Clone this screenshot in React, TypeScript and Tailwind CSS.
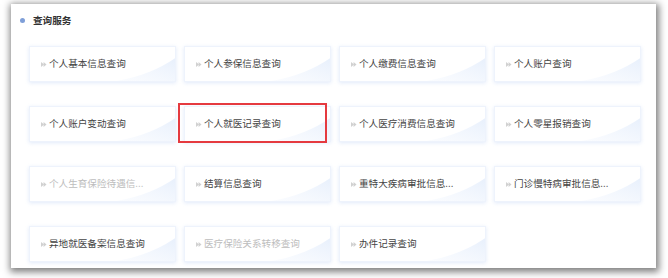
import React from "react";

type Item = { name: string; disabled?: boolean; active?: boolean };

const items: Item[] = [
  { name: "个人基本信息查询" },
  { name: "个人参保信息查询" },
  { name: "个人缴费信息查询" },
  { name: "个人账户查询" },
  { name: "个人账户变动查询" },
  { name: "个人就医记录查询", active: true },
  { name: "个人医疗消费信息查询" },
  { name: "个人零星报销查询" },
  { name: "个人生育保险待遇信...", disabled: true },
  { name: "结算信息查询" },
  { name: "重特大疾病审批信息..." },
  { name: "门诊慢特病审批信息..." },
  { name: "异地就医备案信息查询" },
  { name: "医疗保险关系转移查询", disabled: true },
  { name: "办件记录查询" },
];

// tiny double arrow in front of each label
const Arrow = () => (
  <svg width="6" height="5" viewBox="0 0 7 6" className="shrink-0">
    <path d="M0 0L3.5 3L0 6Z" fill="#d0d0d0" />
    <path d="M3 0L6.5 3L3 6Z" fill="#d0d0d0" />
  </svg>
);

function Card({ item }: { item: Item }) {
  return (
    <div className="relative h-[36px] bg-white border border-[#eef3fc] shadow-[0_1px_4px_rgba(120,160,230,0.22)]">
      <svg className="absolute inset-0" width="100%" height="100%" viewBox="0 0 147 36" preserveAspectRatio="none">
        <defs>
          <linearGradient id="sw" x1="0" y1="1" x2="1" y2="0">
            <stop offset="0" stopColor="#f3f7fe" stopOpacity="0.4" />
            <stop offset="1" stopColor="#e8f0fc" />
          </linearGradient>
        </defs>
        <path d="M88 36 Q122 30 147 12 L147 36 Z" fill="url(#sw)" />
      </svg>
      <div className="relative flex items-center h-full pl-[11px] gap-[2px]">
        <Arrow />
        <span className={`text-[9.6px] leading-none ${item.disabled ? "text-[#bdbdbd]" : "text-[#444]"}`}>
          {item.name}
        </span>
      </div>
      {item.active && (
        <div className="absolute left-[-7px] top-[-4px] w-[149px] h-[40px] border-2 border-[#e53a3f]" />
      )}
    </div>
  );
}

export default function App() {
  return (
    <div
      className="w-[668px] h-[278px] bg-white pt-[4px] pl-[11px] overflow-hidden"
      style={{ fontFamily: '"Noto Sans CJK SC", "Noto Sans", sans-serif' }}
    >
      <div className="w-[645px] h-[264px] bg-white shadow-[1px_2px_7px_2px_rgba(0,0,0,0.5)]">
        <div className="flex items-center pt-[5px] pl-[9px] gap-[8px] h-[22px] box-content">
          <span className="w-[5px] h-[5px] rounded-full bg-[#7f9fd8]" />
          <span className="text-[9.6px] font-bold text-[#333]">查询服务</span>
        </div>
        <div className="grid grid-cols-[repeat(4,147px)] gap-x-[8px] gap-y-[24px] pl-[18px] pt-[15px]">
          {items.map((it) => (
            <Card key={it.name} item={it} />
          ))}
        </div>
      </div>
    </div>
  );
}
